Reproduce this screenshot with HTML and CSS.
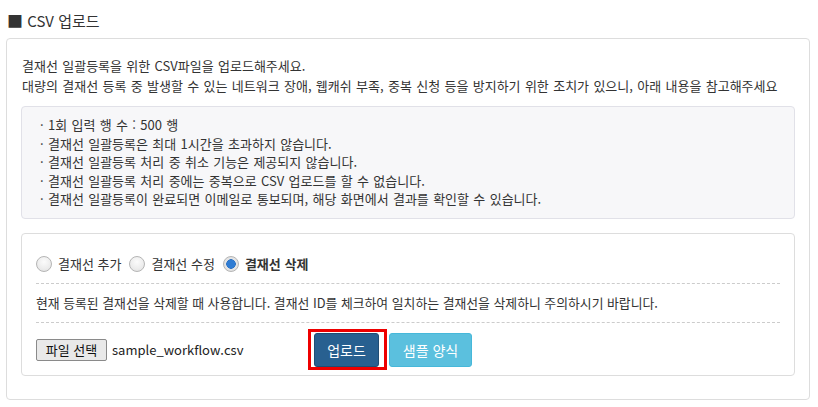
FILE: index.html
```html
<!DOCTYPE html>
<html lang="ko">
<head>
<meta charset="utf-8">
<title>CSV 업로드</title>
<link rel="stylesheet" href="styles.css">
</head>
<body>
<div class="page">
  <h2 class="title"><span class="sq">■</span> CSV 업로드</h2>
  <div class="panel">
    <div class="intro">
      <p>결재선 일괄등록을 위한 CSV파일을 업로드해주세요.</p>
      <p>대량의 결재선 등록 중 발생할 수 있는 네트워크 장애, 웹캐쉬 부족, 중복 신청 등을 방지하기 위한 조치가 있으니, 아래 내용을 참고해주세요</p>
    </div>
    <ul class="notice">
      <li>· 1회 입력 행 수 : 500 행</li>
      <li>· 결재선 일괄등록은 최대 1시간을 초과하지 않습니다.</li>
      <li>· 결재선 일괄등록 처리 중 취소 기능은 제공되지 않습니다.</li>
      <li>· 결재선 일괄등록 처리 중에는 중복으로 CSV 업로드를 할 수 없습니다.</li>
      <li>· 결재선 일괄등록이 완료되면 이메일로 통보되며, 해당 화면에서 결과를 확인할 수 있습니다.</li>
    </ul>
    <div class="options">
      <div class="radios">
        <label class="radio"><input type="radio" name="mode"><span>결재선 추가</span></label>
        <label class="radio"><input type="radio" name="mode"><span>결재선 수정</span></label>
        <label class="radio checked"><input type="radio" name="mode" checked><span>결재선 삭제</span></label>
      </div>
      <p class="desc">현재 등록된 결재선을 삭제할 때 사용합니다. 결재선 ID를 체크하여 일치하는 결재선을 삭제하니 주의하시기 바랍니다.</p>
      <div class="actions">
        <div class="file">
          <button class="file-btn" type="button">파일 선택</button>
          <span class="file-name">sample_workflow.csv</span>
        </div>
        <span class="highlight"><button class="btn btn-primary" type="button">업로드</button></span>
        <button class="btn btn-info" type="button">샘플 양식</button>
      </div>
    </div>
  </div>
</div>
</body>
</html>
```

FILE: styles.css
```css
* { box-sizing: border-box; }
html, body { margin: 0; padding: 0; background: #fff; }
body {
  font-family: "Noto Sans CJK KR", "Noto Sans", sans-serif;
  color: #333;
  font-size: 13px;
}
.page { padding: 8px 8px 0 6px; }
.title {
  margin: 0 0 6px 1px;
  font-size: 15px;
  font-weight: normal;
  line-height: 24px;
  height: 24px;
  color: #333;
}
.sq { color: #333; font-size: 16px; }
.panel {
  border: 1px solid #ddd;
  border-radius: 4px;
  padding: 17px 14px 23px;
}
.intro p { margin: 0; line-height: 20px; padding-left: 1px; word-spacing: 0.7px; }
.notice {
  list-style: none;
  margin: 10px 0 0;
  padding: 9px 18px;
  background: #f7f7f9;
  border: 1px solid #e1e1e8;
  border-radius: 4px;
  line-height: 18.5px;
  word-spacing: 0.7px;
}
.options {
  margin-top: 14px;
  border: 1px solid #ddd;
  border-radius: 4px;
  padding: 20px 14px 8px;
}
.radios {
  display: flex;
  align-items: center;
  height: 20px;
  border-bottom: 1px dashed #ccc;
  box-sizing: content-box;
  padding-bottom: 9px;
}
.radio {
  display: flex;
  align-items: center;
  margin-right: 8px;
}
.radio input {
  appearance: none;
  -webkit-appearance: none;
  margin: 0 6px 0 0;
  width: 16px;
  height: 16px;
  border-radius: 50%;
  border: 1px solid #b5b5b5;
  background: radial-gradient(circle at 50% 35%, #fbfbfb 0%, #ececec 60%, #dedede 100%);
}
.radio input:checked {
  background: radial-gradient(circle, #2f7cd3 0 4px, #2a6fc0 4.5px, #e6e6e6 5px, #dcdcdc 100%);
}
.radio.checked span { font-weight: bold; }
.desc {
  margin: 0;
  padding: 9px 0 10px;
  line-height: 19px;
  font-size: 12.85px;
  border-bottom: 1px dashed #ccc;
}
.actions {
  display: flex;
  align-items: center;
  margin-top: 10px;
}
.file {
  width: 278px;
  display: flex;
  align-items: center;
}
.file-btn {
  font-family: inherit;
  font-size: 13px;
  color: #111;
  height: 22px;
  width: 71px;
  padding: 0;
  background: #e9e9e9;
  border: 1px solid #8a8a8a;
  border-radius: 2px;
  margin: 0 5px 0 0;
  line-height: 20px;
}
.file-name { font-size: 13px; color: #222; }
.highlight {
  position: relative;
  display: flex;
}
.highlight::after {
  content: "";
  position: absolute;
  top: -4px;
  left: -6px;
  right: -8px;
  bottom: -3px;
  border: 3px solid #ee0000;
  pointer-events: none;
}
.btn {
  font-family: inherit;
  font-size: 14px;
  line-height: 20px;
  height: 34px;
  padding: 6px 0;
  border-radius: 3px;
  color: #fff;
  border: 1px solid transparent;
  margin: 0;
}
.btn-primary {
  width: 65px;
  background: #286090;
  border-color: #204d74;
}
.btn-info {
  width: 83px;
  margin-left: 10px;
  background: #5bc0de;
  border-color: #46b8da;
}
```
